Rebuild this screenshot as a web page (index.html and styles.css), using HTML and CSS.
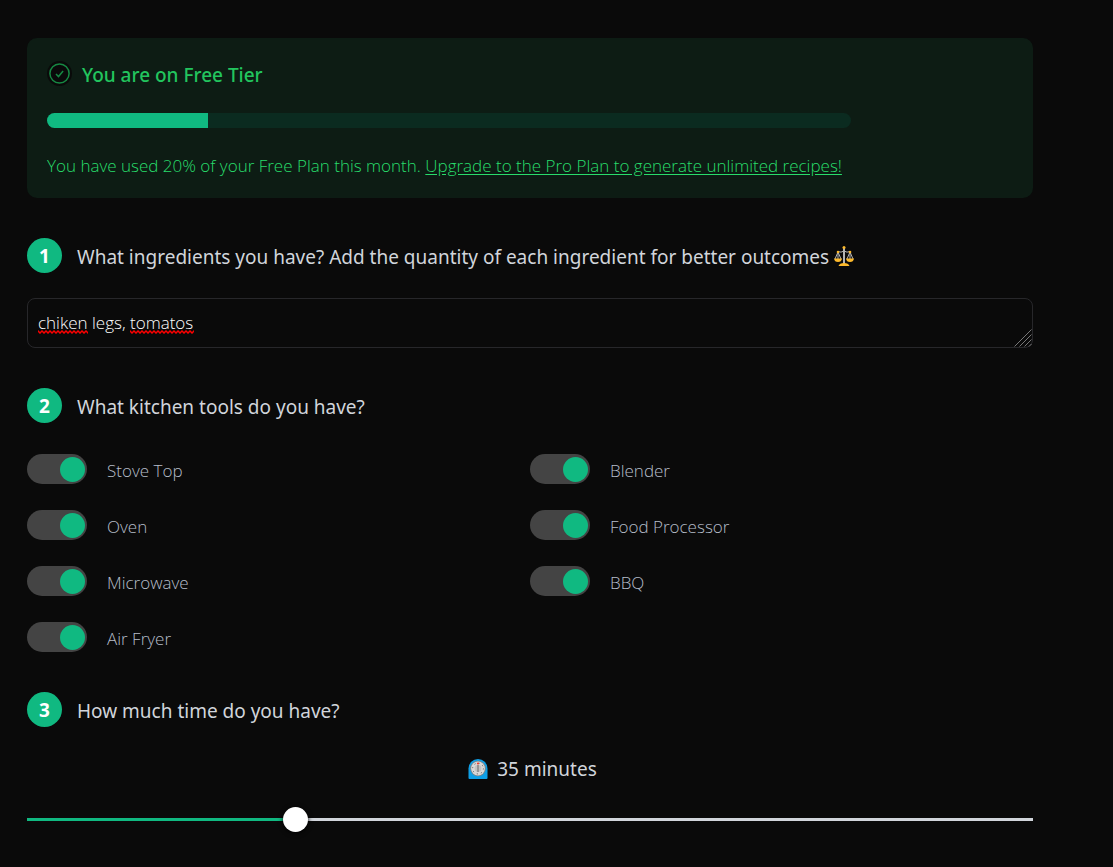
FILE: index.html
```
<!DOCTYPE html>
<html lang="en">
<head>
<meta charset="utf-8">
<meta name="viewport" content="width=device-width, initial-scale=1">
<title>Recipe generator</title>
<link rel="stylesheet" href="styles.css">
</head>
<body>
<main class="page">
  <section class="plan">
    <h2 class="plan-title">
      <svg class="plan-icon" viewBox="0 0 25 25" aria-hidden="true">
        <circle cx="12.5" cy="12.5" r="12.5" fill="#0a0a0a"/>
        <circle cx="12.5" cy="12.5" r="9.6" fill="none" stroke="#168843" stroke-width="1.5"/>
        <path d="M9 12.9l2.5 2.6 4.6-5.6" fill="none" stroke="#168843" stroke-width="1.5"/>
      </svg>
      <span class="plan-name">You are on Free Tier</span>
    </h2>
    <div class="usage" role="progressbar" aria-label="Plan usage" aria-valuenow="20" aria-valuemin="0" aria-valuemax="100">
      <div class="usage-fill" style="width: 20%"></div>
    </div>
    <p class="plan-text">You have used 20% of your Free Plan this month. <a href="#upgrade">Upgrade to the Pro Plan to generate unlimited recipes!</a></p>
  </section>

  <section class="step">
    <div class="step-head">
      <span class="step-number">1</span>
      <label class="step-title" for="ingredients">What ingredients you have? Add the quantity of each ingredient for better outcomes</label>
      <svg class="scales" viewBox="0 0 20 20" role="img" aria-label="Scales">
        <path d="M4 5.5Q7 7 10 5Q13 7 16 5.5M4 6L1 13M4 6L7 13M4 6V13M16 6L13 13M16 6L19 13M16 6V13" fill="none" stroke="#b4b4b4" stroke-width="1"/>
        <path d="M10 1V18" stroke="#b4b4b4" stroke-width="2"/>
        <path d="M0 12.5H8Q7.500 16 4 16T0 12.500ZM12 12.500H20Q19.500 16 16 16T12 12.500ZM4.500 20Q5.500 17 10 17T15.500 20Z" fill="#fcb92c"/>
        <circle cx="10" cy="1.500" r="1.500" fill="#fcb92c"/>
        <circle cx="4" cy="6" r="1.300" fill="#fcb92c"/>
        <circle cx="16" cy="6" r="1.300" fill="#fcb92c"/>
      </svg>
    </div>
    <div class="field">
      <textarea class="ingredients" id="ingredients" rows="1" spellcheck="false">chiken legs, tomatos</textarea>
      <svg class="squiggle squiggle-first" aria-hidden="true">
        <defs><pattern id="wave" width="4" height="4" patternUnits="userSpaceOnUse"><path d="M-1 0L0 1L2 3L4 1L5 0" fill="none" stroke="#f00" stroke-width="1.500"/></pattern></defs>
        <rect width="100%" height="4" fill="url(#wave)"/>
      </svg>
      <svg class="squiggle squiggle-second" aria-hidden="true"><rect width="100%" height="4" fill="url(#wave)"/></svg>
      <svg class="grip" viewBox="0 0 18 18" aria-hidden="true"><path d="M0.500 17.500L17.500 0.500M5.500 17.500L17.500 5.500M10.500 17.500L17.500 10.500M15 17.500L17.500 15" fill="none" stroke="#777" stroke-width="1"/></svg>
    </div>
  </section>

  <section class="step">
    <div class="step-head">
      <span class="step-number">2</span>
      <h2 class="step-title">What kitchen tools do you have?</h2>
    </div>
    <div class="tools">
      <label class="tool"><input class="toggle" type="checkbox" checked><span class="tool-name">Stove Top</span></label>
      <label class="tool"><input class="toggle" type="checkbox" checked><span class="tool-name">Oven</span></label>
      <label class="tool"><input class="toggle" type="checkbox" checked><span class="tool-name">Microwave</span></label>
      <label class="tool"><input class="toggle" type="checkbox" checked><span class="tool-name">Air Fryer</span></label>
      <label class="tool"><input class="toggle" type="checkbox" checked><span class="tool-name">Blender</span></label>
      <label class="tool"><input class="toggle" type="checkbox" checked><span class="tool-name">Food Processor</span></label>
      <label class="tool"><input class="toggle" type="checkbox" checked><span class="tool-name">BBQ</span></label>
    </div>
  </section>

  <section class="step">
    <div class="step-head">
      <span class="step-number">3</span>
      <label class="step-title" for="time">How much time do you have?</label>
    </div>
    <output class="time" for="time">
      <svg class="timer" viewBox="0 0 20 20" role="img" aria-label="Timer">
        <path d="M0.500 19V9.500A9.500 9.500 0 0 1 19.500 9.500V19Q19.500 20 18.500 20H1.500Q0.500 20 0.500 19Z" fill="#0f9fe6"/>
        <circle cx="10" cy="9.500" r="7.800" fill="#7d8488"/>
        <circle cx="10" cy="9.500" r="6.900" fill="#d8d8d8"/>
        <circle cx="10" cy="9.500" r="5.400" fill="none" stroke="#555" stroke-width="1" stroke-dasharray="1 3.240"/>
        <circle cx="10" cy="9.500" r="3.400" fill="#c2c2c2"/>
        <path d="M10 6V13" stroke="#858585" stroke-width="1.500"/>
        <circle cx="10" cy="4.500" r="1.100" fill="#f03a2e"/>
      </svg>
      35 minutes
    </output>
    <input class="slider" id="time" type="range" min="5" max="120" value="35">
  </section>
</main>
</body>
</html>
```
FILE: styles.css
```
* {
  box-sizing: border-box;
}

body {
  margin: 0;
  background: #0a0a0a;
  color: #d1d5db;
  font-family: "Noto Sans", "Open Sans", sans-serif;
  font-size: 19px;
  line-height: 30px;
}

h2,
p {
  margin: 0;
}

.page {
  display: flex;
  flex-direction: column;
  gap: 40px;
  padding: 38px 80px 32px 27px;
}

.plan {
  display: flex;
  flex-direction: column;
  gap: 25px;
  padding: 20px;
  border-radius: 10px;
  background: #0d1c14;
  color: #22c55e;
}

.plan-title {
  display: flex;
  align-items: center;
  gap: 10px;
  height: 30px;
  font-size: 19px;
  font-weight: 550;
}

.plan-name,
.step-title,
.tool-name {
  padding-top: 3px;
}

.plan-icon {
  width: 25px;
  height: 25px;
}

.usage {
  width: 804px;
  max-width: 100%;
  height: 15px;
  overflow: hidden;
  border-radius: 8px;
  background: #0b2b20;
}

.usage-fill {
  height: 100%;
  background: #10b981;
}

.plan-text,
.ingredients,
.tool {
  font-family: "Open Sans", "Noto Sans", sans-serif;
  font-size: 17px;
  font-weight: 300;
  line-height: 25px;
}

.plan-text {
  color: #28dc6b;
}

.plan-text a {
  color: inherit;
  text-decoration: underline;
  text-underline-offset: 2px;
}

.step-head {
  display: flex;
  align-items: center;
}

.step-number {
  display: grid;
  place-items: center;
  flex: none;
  width: 35px;
  height: 35px;
  margin-right: 15px;
  border-radius: 50%;
  background: #10b981;
  color: #fff;
  font-weight: 700;
}

.step-title {
  font-size: 19px;
  font-weight: 400;
}

.scales {
  flex: none;
  width: 20px;
  height: 20px;
  margin-left: 5px;
}

.field {
  position: relative;
  display: flex;
  margin-top: 25px;
}

.ingredients {
  width: 100%;
  height: 50px;
  padding: 11px 10px;
  border: 1px solid #27272a;
  border-radius: 8px;
  outline: none;
  background: transparent;
  color: #fff;
  resize: none;
}

.squiggle {
  position: absolute;
  top: 32px;
  height: 4px;
}

.squiggle-first {
  left: 11px;
  width: 50px;
}

.squiggle-second {
  left: 103px;
  width: 64px;
}

.grip {
  position: absolute;
  right: 1px;
  bottom: 1px;
  width: 18px;
  height: 18px;
  pointer-events: none;
}

.tools {
  display: grid;
  grid-template-columns: 1fr 1fr;
  grid-template-rows: repeat(4, 30px);
  grid-auto-flow: column;
  row-gap: 26px;
  margin-top: 31px;
}

.tool {
  display: flex;
  align-items: center;
  gap: 20px;
  color: #b6bdc9;
}

.toggle {
  appearance: none;
  display: flex;
  align-items: center;
  flex: none;
  width: 60px;
  height: 30px;
  margin: 0;
  padding: 0 2px;
  border-radius: 15px;
  background: #444;
}

.toggle::before {
  content: "";
  width: 25px;
  height: 25px;
  border-radius: 50%;
  background: #10b981;
}

.toggle:checked {
  justify-content: flex-end;
}

.time {
  display: flex;
  align-items: center;
  justify-content: center;
  gap: 9px;
  padding-left: 5px;
  margin-top: 27px;
}

.timer {
  width: 20px;
  height: 20px;
}

.slider {
  appearance: none;
  display: block;
  width: 100%;
  height: 25px;
  margin: 23px 0 0;
  background: linear-gradient(to right, #10b981 27%, #d1d5db 27%) center / 100% 3px no-repeat;
}

.slider::-webkit-slider-thumb {
  appearance: none;
  width: 25px;
  height: 25px;
  border-radius: 50%;
  background: #fff;
  box-shadow: 0 1px 5px #000;
}
```
